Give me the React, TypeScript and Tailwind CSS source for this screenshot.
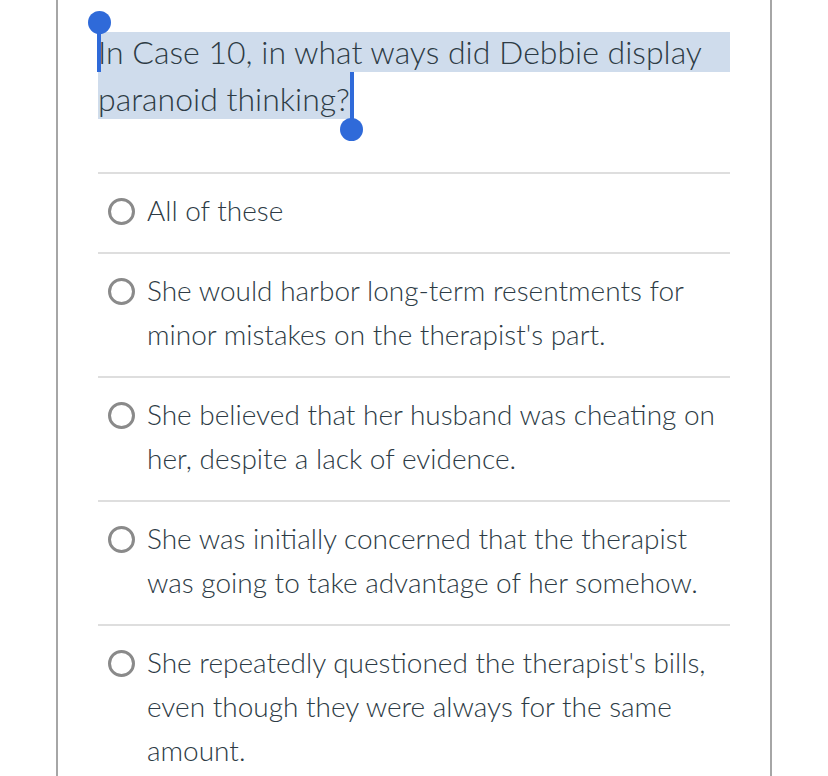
import React from "react";

const options = [
	"All of these",
	"She would harbor long-term resentments for minor mistakes on the therapist's part.",
	"She believed that her husband was cheating on her, despite a lack of evidence.",
	"She was initially concerned that the therapist was going to take advantage of her somehow.",
	"She repeatedly questioned the therapist's bills, even though they were always for the same amount.",
];

function Radio() {
	return (
		<span className="mt-[10px] ml-[10px] block h-[27px] w-[27px] shrink-0 rounded-full border-[3px] border-[#8a8a8a] bg-white" />
	);
}

export default function App() {
	return (
		<div
			className="h-screen w-full overflow-hidden bg-white text-[#2d3b45]"
			style={{ fontFamily: "'Lato Light', Lato, 'Open Sans', sans-serif" }}
		>
			<div className="ml-[56px] min-h-full w-[716px] border-x-2 border-[#a6a6a6] px-[40px] pt-[32px]">
				{/* question with the text selection */}
				<div className="relative text-[32px] font-light">
					<div className="h-[40px] bg-[#cfdcec] leading-[40px] whitespace-nowrap">
						In Case 10, in what ways did Debbie display
					</div>
					<div className="h-[47px]">
						<span className="relative inline-block h-[47px] bg-[#cfdcec] pt-[7px] leading-[40px]">
							paranoid thinking?
							<span className="absolute top-0 right-[-4px] h-[50px] w-[4px] bg-[#2f6ad9]" />
							<span className="absolute top-[46px] right-[-13px] h-[23px] w-[23px] rounded-full bg-[#2f6ad9]" />
						</span>
					</div>
					<span className="absolute top-[-2px] left-[-1px] h-[42px] w-[4px] bg-[#2f6ad9]" />
					<span className="absolute top-[-21px] left-[-10px] h-[23px] w-[23px] rounded-full bg-[#2f6ad9]" />
				</div>

				<div className="mt-[53px]">
					{options.map((text) => (
						<div
							key={text}
							className="flex items-start gap-[12px] border-t-2 border-[#dedede] pt-[14px] pb-[20px]"
						>
							<Radio />
							<p className="text-[28px] leading-[44px] font-light">{text}</p>
						</div>
					))}
				</div>
			</div>
		</div>
	);
}
